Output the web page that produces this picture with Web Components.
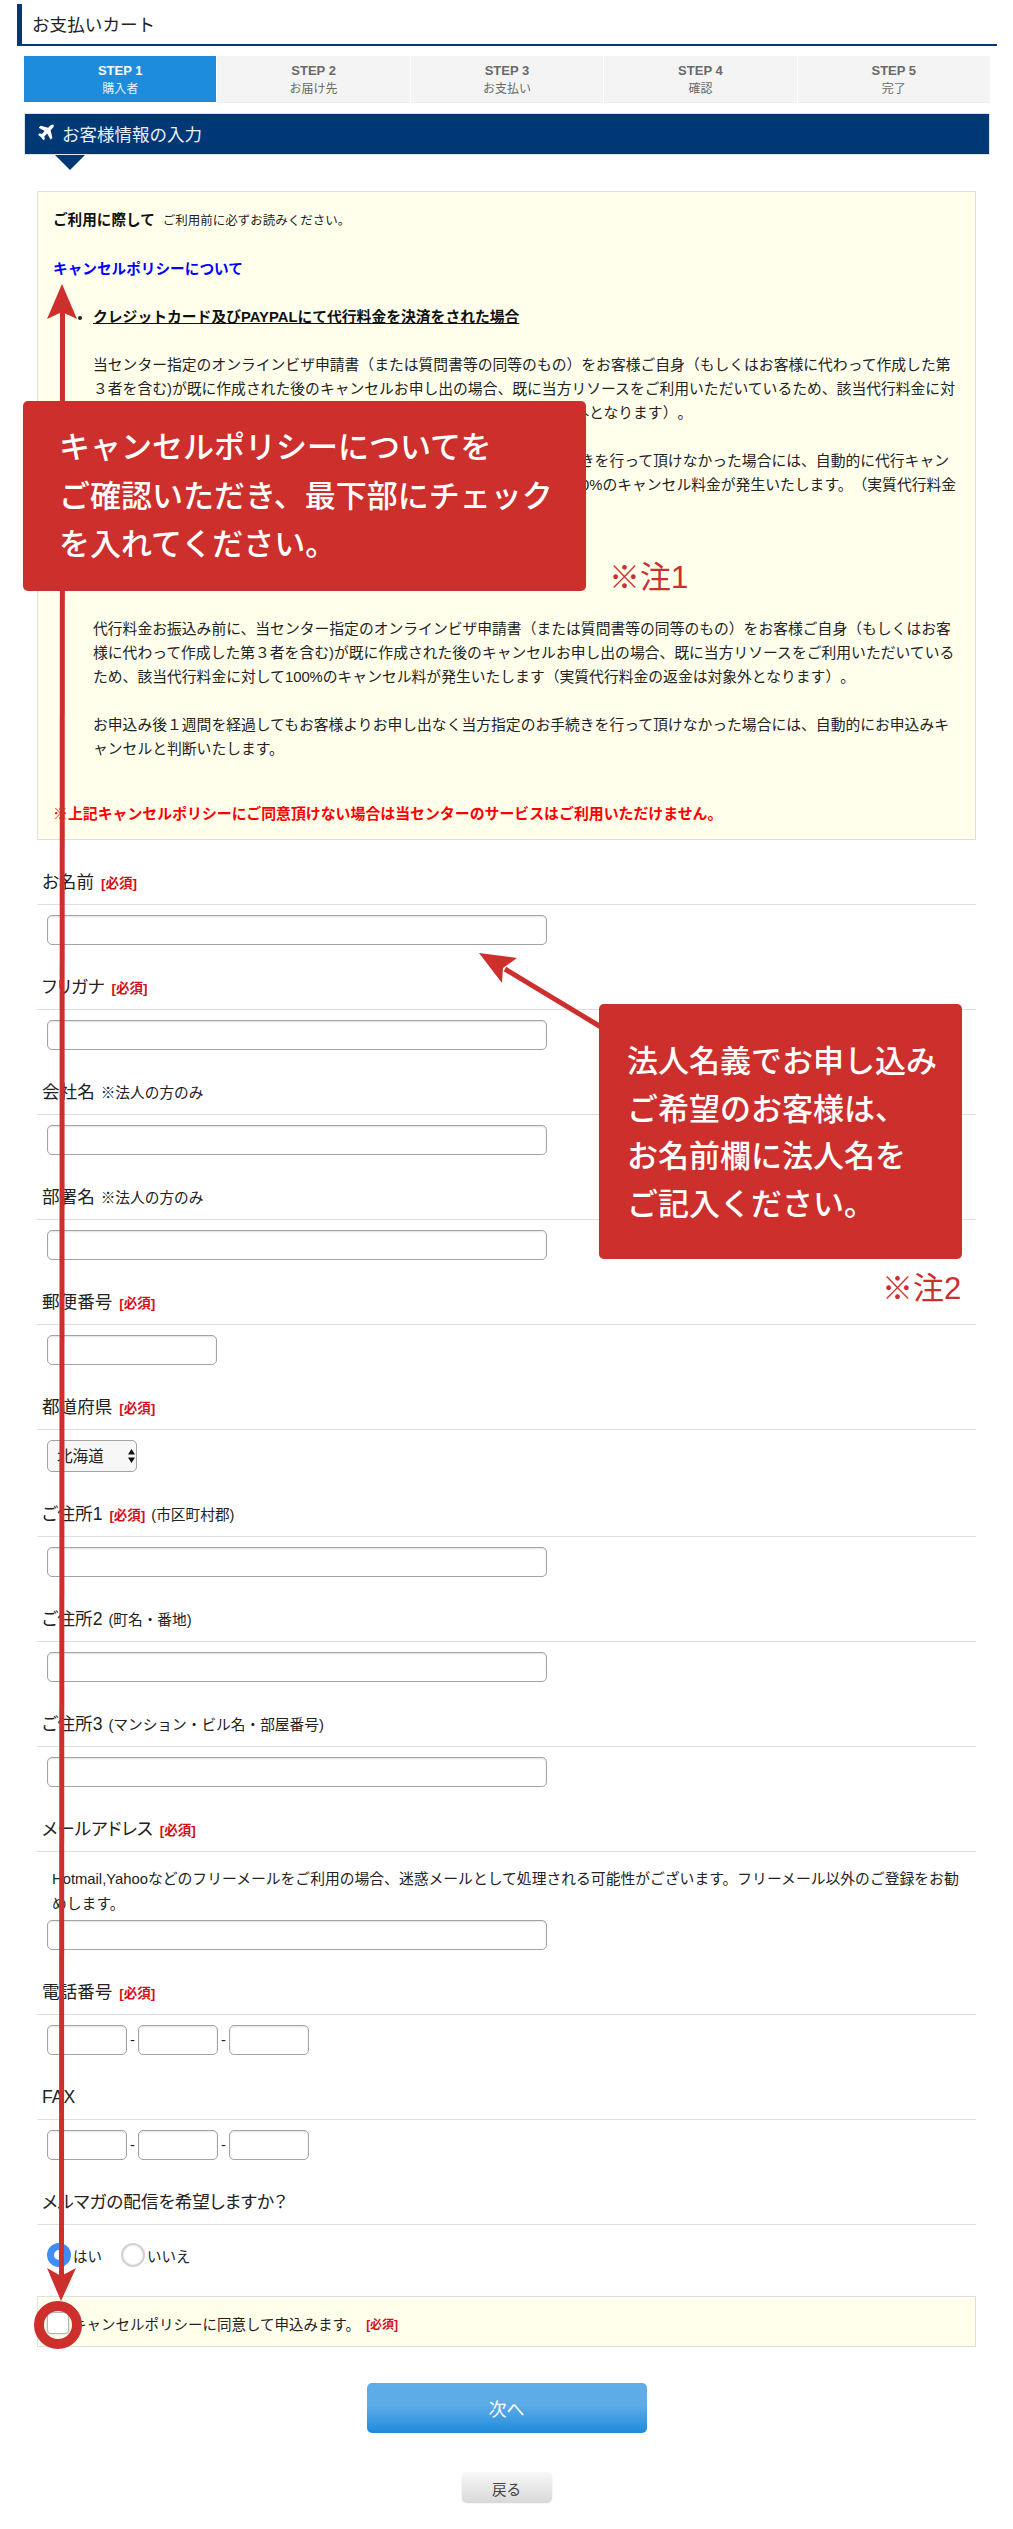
<!DOCTYPE html>
<html lang="ja">
<head>
<meta charset="utf-8">
<title>お支払いカート</title>
<style>
  html, body { margin: 0; background: #fff; }
  body { font-family: "Liberation Sans", "Noto Sans CJK JP", sans-serif; color: #222; text-spacing-trim: space-all; }
  #page { position: relative; width: 1013px; height: 2529px; overflow: hidden; }
</style>
</head>
<body>
<div id="page">
  <page-title>お支払いカート</page-title>

  <step-bar>
    <step-item step="STEP 1" active>購入者</step-item>
    <step-item step="STEP 2">お届け先</step-item>
    <step-item step="STEP 3">お支払い</step-item>
    <step-item step="STEP 4">確認</step-item>
    <step-item step="STEP 5">完了</step-item>
  </step-bar>

  <section-head>お客様情報の入力</section-head>

  <notice-box></notice-box>

  <form-row>
    <span slot="label">お名前 <req-mark></req-mark></span>
    <text-field></text-field>
  </form-row>
  <form-row>
    <span slot="label">フリガナ <req-mark></req-mark></span>
    <text-field></text-field>
  </form-row>
  <form-row>
    <span slot="label">会社名 <small-note>※法人の方のみ</small-note></span>
    <text-field></text-field>
  </form-row>
  <form-row>
    <span slot="label">部署名 <small-note>※法人の方のみ</small-note></span>
    <text-field></text-field>
  </form-row>
  <form-row>
    <span slot="label">郵便番号 <req-mark></req-mark></span>
    <text-field width="170"></text-field>
  </form-row>
  <form-row>
    <span slot="label">都道府県 <req-mark></req-mark></span>
    <pref-select></pref-select>
  </form-row>
  <form-row>
    <span slot="label">ご住所1 <req-mark></req-mark> <small-note>(市区町村郡)</small-note></span>
    <text-field></text-field>
  </form-row>
  <form-row>
    <span slot="label">ご住所2 <small-note>(町名・番地)</small-note></span>
    <text-field></text-field>
  </form-row>
  <form-row>
    <span slot="label">ご住所3 <small-note>(マンション・ビル名・部屋番号)</small-note></span>
    <text-field></text-field>
  </form-row>
  <form-row>
    <span slot="label">メールアドレス <req-mark></req-mark></span>
    <field-note>Hotmail,Yahooなどのフリーメールをご利用の場合、迷惑メールとして処理される可能性がございます。フリーメール以外のご登録をお勧めします。</field-note>
    <text-field></text-field>
  </form-row>
  <form-row>
    <span slot="label">電話番号 <req-mark></req-mark></span>
    <tel-field></tel-field>
  </form-row>
  <form-row>
    <span slot="label">FAX</span>
    <tel-field></tel-field>
  </form-row>
  <form-row>
    <span slot="label">メルマガの配信を希望しますか？</span>
    <radio-group></radio-group>
  </form-row>

  <agree-box>キャンセルポリシーに同意して申込みます。</agree-box>

  <form-actions>
    <action-button primary>次へ</action-button>
    <action-button>戻る</action-button>
  </form-actions>

  <guide-overlay></guide-overlay>
</div>

<script>
// Small base class: every element just renders a string into an open shadow root.
class ShadowEl extends HTMLElement {
  connectedCallback() {
    if (this.shadowRoot) return;
    this.attachShadow({ mode: 'open' }).innerHTML = this.render();
  }
}

customElements.define('page-title', class extends ShadowEl {
  render() {
    return `<style>
      :host { display: block; box-sizing: border-box; height: 42px; margin: 4px 16px 0 17px;
              border-left: 5px solid #003876; border-bottom: 2px solid #003876;
              padding-left: 10px; font-size: 17.6px; line-height: 42px; color: #222; }
    </style><slot></slot>`;
  }
});

customElements.define('step-bar', class extends ShadowEl {
  render() {
    return `<style>
      :host { display: grid; grid-template-columns: repeat(5, 1fr); gap: 1px;
              height: 47px; margin: 10px 23px 0 24px; }
    </style><slot></slot>`;
  }
});

customElements.define('step-item', class extends ShadowEl {
  render() {
    return `<style>
      :host { display: block; box-sizing: border-box; padding-top: 6px; text-align: center;
              background: #f4f4f4; color: #6a6a6a; border-bottom: 1px solid #eee; }
      :host([active]) { background: #1e8cdc; background-clip: padding-box; color: #fff; border-bottom-color: transparent; }
      b { display: block; font-size: 13px; line-height: 18px; }
      span { display: block; font-size: 12px; line-height: 18px; }
      :host([active]) span { color: #e4f1fb; }
    </style><b>${this.getAttribute('step')}</b><span><slot></slot></span>`;
  }
});

customElements.define('section-head', class extends ShadowEl {
  render() {
    return `<style>
      :host { display: flex; align-items: center; gap: 8px; position: relative; box-sizing: border-box;
              height: 42px; margin: 10px 23px 0 24px; padding: 0 0 2px 13px; background: #003876;
              border: 1px solid #dde3ea; color: #e9eff6; font-size: 17.5px; }
      :host::after { content: ""; position: absolute; left: 30px; top: 41px; border-style: solid;
                     border-width: 15px 15px 0; border-color: #003876 transparent transparent; }
      svg { width: 16px; height: 20px; fill: #fff; flex: none; }
    </style>
    <svg viewBox="0 0 1408 1792"><path d="M1376 160q44 52 12 148t-108 172l-161 161 160 696q5 19-12 33l-128 96q-7 6-19 6-4 0-7-1-15-3-21-16l-279-508-259 259 53 194q5 17-8 31l-96 96q-9 9-23 9h-2q-15-2-24-13l-189-252-252-189q-11-7-13-23-1-13 9-25l96-97q9-9 23-9 6 0 8 1l194 53 259-259-508-279q-14-8-17-24-2-16 9-27l128-128q14-13 30-8l665 159 160-160q76-76 172-108t148 12z"/></svg>
    <span><slot></slot></span>`;
  }
});

customElements.define('notice-box', class extends ShadowEl {
  render() {
    return `<style>
      :host { display: block; box-sizing: border-box; height: 649px; margin: 36px 37px 0;
              padding: 16px 15px 0 15px; background: #ffffec; border: 1px solid #dedede;
              font-size: 14.8px; line-height: 24px; color: #222; }
      p { margin: 0 0 24px; }
      .lead b { font-size: 14.6px; color: #111; }
      .lead span { font-size: 12.5px; margin-left: 8px; }
      .policy { color: #00f; font-weight: bold; font-size: 14.65px; }
      ul { margin: 0; padding: 0 0 0 40px; }
      li + li { margin-top: 48px; }
      li b { text-decoration: underline; color: #111; }
      li p { margin: 24px 0 0; }
      .warn { margin-top: 41px; color: #f00; font-weight: bold; font-size: 14.9px; }
    </style>
    <p class="lead"><b>ご利用に際して</b><span>ご利用前に必ずお読みください。</span></p>
    <p class="policy">キャンセルポリシーについて</p>
    <ul>
      <li>
        <b>クレジットカード及びPAYPALにて代行料金を決済をされた場合</b>
        <p>当センター指定のオンラインビザ申請書（または質問書等の同等のもの）をお客様ご自身（もしくはお客様に代わって作成した第３者を含む)が既に作成された後のキャンセルお申し出の場合、既に当方リソースをご利用いただいているため、該当代行料金に対して100%のキャンセル料が発生いたします（実質代行料金の返金は対象外となります）。</p>
        <p>お申込み後１週間を経過してもお客様よりお申し出なく当方指定のお手続きを行って頂けなかった場合には、自動的に代行キャンセルとさせていただきます。また、その場合には該当代行料金に対して100%のキャンセル料金が発生いたします。（実質代行料金の返金は対象外となります）。</p>
      </li>
      <li>
        <b>銀行振込にて代行料金をお支払いいただく場合</b>
        <p>代行料金お振込み前に、当センター指定のオンラインビザ申請書（または質問書等の同等のもの）をお客様ご自身（もしくはお客様に代わって作成した第３者を含む)が既に作成された後のキャンセルお申し出の場合、既に当方リソースをご利用いただいているため、該当代行料金に対して100%のキャンセル料が発生いたします（実質代行料金の返金は対象外となります）。</p>
        <p>お申込み後１週間を経過してもお客様よりお申し出なく当方指定のお手続きを行って頂けなかった場合には、自動的にお申込みキャンセルと判断いたします。</p>
      </li>
    </ul>
    <p class="warn">※上記キャンセルポリシーにご同意頂けない場合は当センターのサービスはご利用いただけません。</p>`;
  }
});

customElements.define('form-row', class extends ShadowEl {
  render() {
    return `<style>
      :host { display: block; margin: 30px 37px 0; }
      /* kana in these labels is set tighter than in the body text */
      .label { height: 24px; padding: 0 0 10px 5px; border-bottom: 1px solid #dedede;
               font-size: 17.6px; line-height: 24px; white-space: nowrap; color: #222;
               font-feature-settings: "palt"; }
      .body { padding: 10px 0 0 10px; }
    </style>
    <div class="label"><slot name="label"></slot></div>
    <div class="body"><slot></slot></div>`;
  }
});

customElements.define('req-mark', class extends ShadowEl {
  render() {
    return `<style>
      :host { display: inline; margin-left: 2px; color: #d0111b; font-weight: bold; font-size: 13.5px; font-feature-settings: normal; }
      :host([small]) { font-size: 12px; }
    </style>[必須]`;
  }
});

customElements.define('small-note', class extends ShadowEl {
  render() {
    return `<style>:host { display: inline; margin-left: 1px; font-size: 14.7px; font-feature-settings: normal; }</style><slot></slot>`;
  }
});

customElements.define('field-note', class extends ShadowEl {
  render() {
    return `<style>
      :host { display: block; margin: 5px 15px 3px 5px; font-size: 14.8px; line-height: 25px; color: #222; }
    </style><slot></slot>`;
  }
});

customElements.define('text-field', class extends ShadowEl {
  render() {
    const w = this.getAttribute('width') || 500;
    return `<style>
      :host { display: block; width: ${w}px; height: 30px; }
      input { display: block; box-sizing: border-box; width: 100%; height: 100%; margin: 0; padding: 0 6px;
              background: #fff; border: 1px solid #a3a3a3; border-radius: 5px; outline: 0;
              box-shadow: inset 0 1px 2px rgba(0,0,0,.12); font: 15px "Liberation Sans", "Noto Sans CJK JP", sans-serif; }
    </style><input type="text">`;
  }
});

customElements.define('tel-field', class extends ShadowEl {
  render() {
    return `<style>
      :host { display: flex; align-items: center; }
      text-field { flex: none; }
      span { width: 11px; text-align: center; font-size: 14.7px; color: #222; }
    </style>
    <text-field width="80"></text-field><span>-</span><text-field width="80"></text-field><span>-</span><text-field width="80"></text-field>`;
  }
});

customElements.define('pref-select', class extends ShadowEl {
  render() {
    return `<style>
      :host { display: block; position: relative; width: 90px; height: 32px; }
      select { appearance: none; -webkit-appearance: none; display: block; box-sizing: border-box;
               width: 100%; height: 100%; margin: 0; padding: 0 0 0 9px; background: #f7f7f7;
               border: 1px solid #a3a3a3; border-radius: 5px; color: #222;
               font: 15.6px "Liberation Sans", "Noto Sans CJK JP", sans-serif; }
      svg { position: absolute; left: 81px; top: 9px; width: 7px; height: 14px; fill: #111; pointer-events: none; }
    </style>
    <select><option>北海道</option></select>
    <svg viewBox="0 0 7 14"><path d="M3.5 0L7 5.5H0zM3.5 14L0 8.5h7z"/></svg>`;
  }
});

customElements.define('radio-group', class extends ShadowEl {
  render() {
    return `<style>
      :host { display: flex; align-items: center; height: 24px; padding-top: 8px; font-size: 14.5px; color: #222; }
      label { display: flex; align-items: center; gap: 2px; }
      label + label { margin-left: 19px; }
      input { appearance: none; -webkit-appearance: none; box-sizing: border-box; width: 24px; height: 24px; margin: 0;
              border: 2px solid #d2d2d2; border-radius: 50%; background: #fff; box-shadow: inset 0 0 2px rgba(0,0,0,.15); }
      input:checked { border: 7px solid #3f8df5; box-shadow: none; }
    </style>
    <label><input type="radio" name="mag" checked>はい</label>
    <label><input type="radio" name="mag">いいえ</label>`;
  }
});

customElements.define('agree-box', class extends ShadowEl {
  render() {
    return `<style>
      :host { display: flex; align-items: center; box-sizing: border-box; height: 51px; margin: 29px 37px 0;
              padding: 3px 0 0 9px; background: #ffffec; border: 1px solid #dedede; font-size: 14.5px; color: #222; }
      input { appearance: none; -webkit-appearance: none; box-sizing: border-box; width: 22px; height: 22px; margin: 0 3px 0 0;
              flex: none; background: #fff; border: 1px solid #b5b5b5; border-radius: 4px; box-shadow: 0 0 2px rgba(0,0,0,.3); }
      req-mark { margin-left: 6px; }
    </style>
    <input type="checkbox"><span><slot></slot></span><req-mark small></req-mark>`;
  }
});

customElements.define('form-actions', class extends ShadowEl {
  render() {
    return `<style>
      :host { display: flex; flex-direction: column; align-items: center; gap: 40px; margin-top: 36px; }
    </style><slot></slot>`;
  }
});

customElements.define('action-button', class extends ShadowEl {
  render() {
    return `<style>
      :host { display: block; }
      button { display: block; width: 90px; height: 30px; padding: 0; border: 0; border-radius: 5px;
               background: linear-gradient(#f7f7f7, #d9d9d9); color: #444; box-shadow: 0 0 2px rgba(0,0,0,.12);
               font: 14.6px "Liberation Sans", "Noto Sans CJK JP", sans-serif; }
      :host([primary]) button { width: 280px; height: 50px; border-radius: 5px; box-shadow: none; color: #fff; font-size: 18px;
               background: linear-gradient(#60ade8 0, #5cabe7 45%, #1e8bdc 100%); }
    </style><button type="button"><slot></slot></button>`;
  }
});

// Annotations drawn on top of the captured form: arrows, ring and the two red notes.
customElements.define('guide-overlay', class extends ShadowEl {
  render() {
    return `<style>
      :host { position: absolute; left: 0; top: 0; width: 1013px; height: 2529px; pointer-events: none; }
      svg { position: absolute; left: 0; top: 0; }
      .note { position: absolute; box-sizing: border-box; background: #cd2f2d; border-radius: 5px; color: #fff;
              font-size: 31px; font-weight: 500; white-space: nowrap; }
      .n1 { left: 23px; top: 401px; width: 563px; height: 190px; padding: 23px 0 0 36px; line-height: 48.5px; }
      .n2 { left: 599px; top: 1004px; width: 363px; height: 255px; padding: 34px 0 0 28px; line-height: 47.7px; }
      .tag { position: absolute; color: #cd2f2d; font-size: 31px; line-height: 40px; white-space: nowrap; }
      .t1 { left: 609px; top: 558px; }
      .t2 { left: 882px; top: 1269px; }
    </style>
    <svg width="1013" height="2529" viewBox="0 0 1013 2529" fill="#cd2f2d">
      <path d="M62.5 300L61.5 2285" stroke="#cd2f2d" stroke-width="5"/>
      <path d="M62 284L77 319 62 312 47 319z"/>
      <path d="M61 2301L47 2268 61 2276 76 2268z"/>
      <circle cx="58" cy="2325" r="19" fill="none" stroke="#cd2f2d" stroke-width="10"/>
      <path d="M505 969L601 1027" stroke="#cd2f2d" stroke-width="5"/>
      <path d="M479 953L517 958 503 968 502 983z"/>
    </svg>
    <div class="note n1">キャンセルポリシーについてを<br>ご確認いただき、最下部にチェック<br>を入れてください。</div>
    <div class="note n2">法人名義でお申し込み<br>ご希望のお客様は、<br>お名前欄に法人名を<br>ご記入ください。</div>
    <div class="tag t1">※注1</div>
    <div class="tag t2">※注2</div>`;
  }
});
</script>
</body>
</html>
